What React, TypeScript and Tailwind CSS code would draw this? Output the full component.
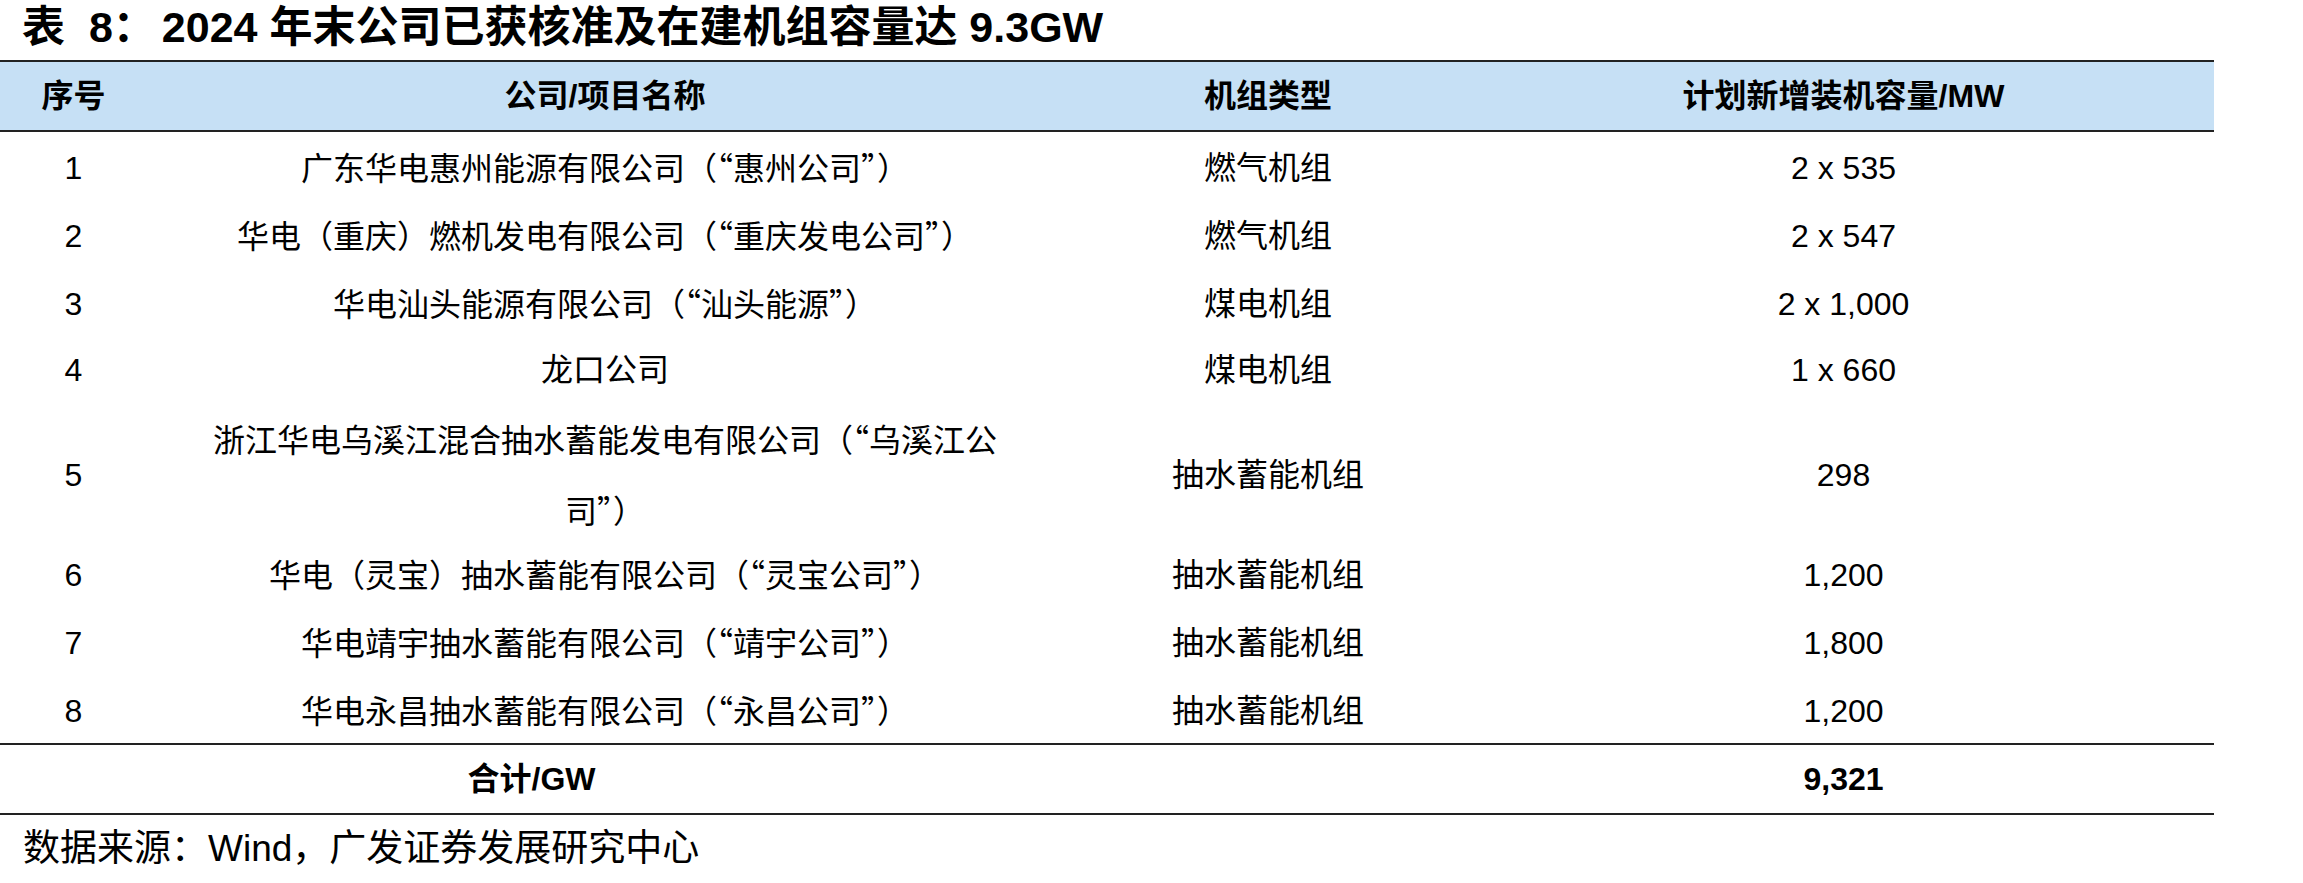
import React from "react";

const FONT = "font-['Liberation_Sans','Noto_Sans_CJK_SC',sans-serif]";

function fmt(s: string): React.ReactNode {
  const parts: React.ReactNode[] = [];
  let buf = "";
  let k = 0;
  for (const ch of s) {
    if (ch === "“" || ch === "”") {
      if (buf) parts.push(buf);
      buf = "";
      parts.push(
        <span key={k++} className="font-['Noto_Sans_CJK_SC',sans-serif]">
          {ch}
        </span>
      );
    } else {
      buf += ch;
    }
  }
  if (buf) parts.push(buf);
  return <>{parts}</>;
}

type Row = { no: string; name: React.ReactNode; type: string; cap: string; tall?: boolean };

const rows: Row[] = [
  { no: "1", name: fmt("广东华电惠州能源有限公司（“惠州公司”）"), type: "燃气机组", cap: "2 x 535" },
  { no: "2", name: fmt("华电（重庆）燃机发电有限公司（“重庆发电公司”）"), type: "燃气机组", cap: "2 x 547" },
  { no: "3", name: fmt("华电汕头能源有限公司（“汕头能源”）"), type: "煤电机组", cap: "2 x 1,000" },
  { no: "4", name: "龙口公司", type: "煤电机组", cap: "1 x 660" },
  {
    no: "5",
    name: (
      <>
        {fmt("浙江华电乌溪江混合抽水蓄能发电有限公司（“乌溪江公")}
        <br />
        {fmt("司”）")}
      </>
    ),
    type: "抽水蓄能机组",
    cap: "298",
    tall: true,
  },
  { no: "6", name: fmt("华电（灵宝）抽水蓄能有限公司（“灵宝公司”）"), type: "抽水蓄能机组", cap: "1,200" },
  { no: "7", name: fmt("华电靖宇抽水蓄能有限公司（“靖宇公司”）"), type: "抽水蓄能机组", cap: "1,800" },
  { no: "8", name: fmt("华电永昌抽水蓄能有限公司（“永昌公司”）"), type: "抽水蓄能机组", cap: "1,200" },
];

const GRID = "grid grid-cols-[147px_916px_410px_741px]";

export default function App() {
  return (
    <div className={`w-[2303px] h-[883px] bg-white text-black ${FONT}`}>
      <div className="h-[60px] flex items-center pl-[22px] pb-[6px] text-[43px] font-bold leading-none whitespace-pre">
        <span>{"表  8："}</span>
        <span className="ml-[6px]">{"2024 年末公司已获核准及在建机组容量达 9.3GW"}</span>
      </div>
      <div className="w-[2214px] border-t-2 border-b-2 border-[#222]">
        <div className={`${GRID} h-[70px] bg-[#c6e0f5] border-b-2 border-[#222] text-[32px] font-bold leading-none`}>
          <div className="flex items-center justify-center">序号</div>
          <div className="flex items-center justify-center">公司/项目名称</div>
          <div className="flex items-center justify-center">机组类型</div>
          <div className="flex items-center justify-center">计划新增装机容量/MW</div>
        </div>
        {rows.map((r) => (
          <div
            key={r.no}
            className={`${GRID} ${r.tall ? "h-[135px]" : "h-[68px]"} text-[32px] leading-[68px]`}
          >
            <div className="flex items-center justify-center">{r.no}</div>
            <div className="flex items-center justify-center text-center whitespace-nowrap">
              <div>{r.name}</div>
            </div>
            <div className="flex items-center justify-center">{r.type}</div>
            <div className="flex items-center justify-center">{r.cap}</div>
          </div>
        ))}
        <div className="grid grid-cols-[1063px_410px_741px] h-[70px] border-t-2 border-[#222] text-[32px] font-bold leading-none">
          <div className="flex items-center justify-center">合计/GW</div>
          <div />
          <div className="flex items-center justify-center">9,321</div>
        </div>
      </div>
      <div className="h-[66px] flex items-center pl-[23px] text-[37px] leading-none">
        数据来源：Wind，广发证券发展研究中心
      </div>
    </div>
  );
}
